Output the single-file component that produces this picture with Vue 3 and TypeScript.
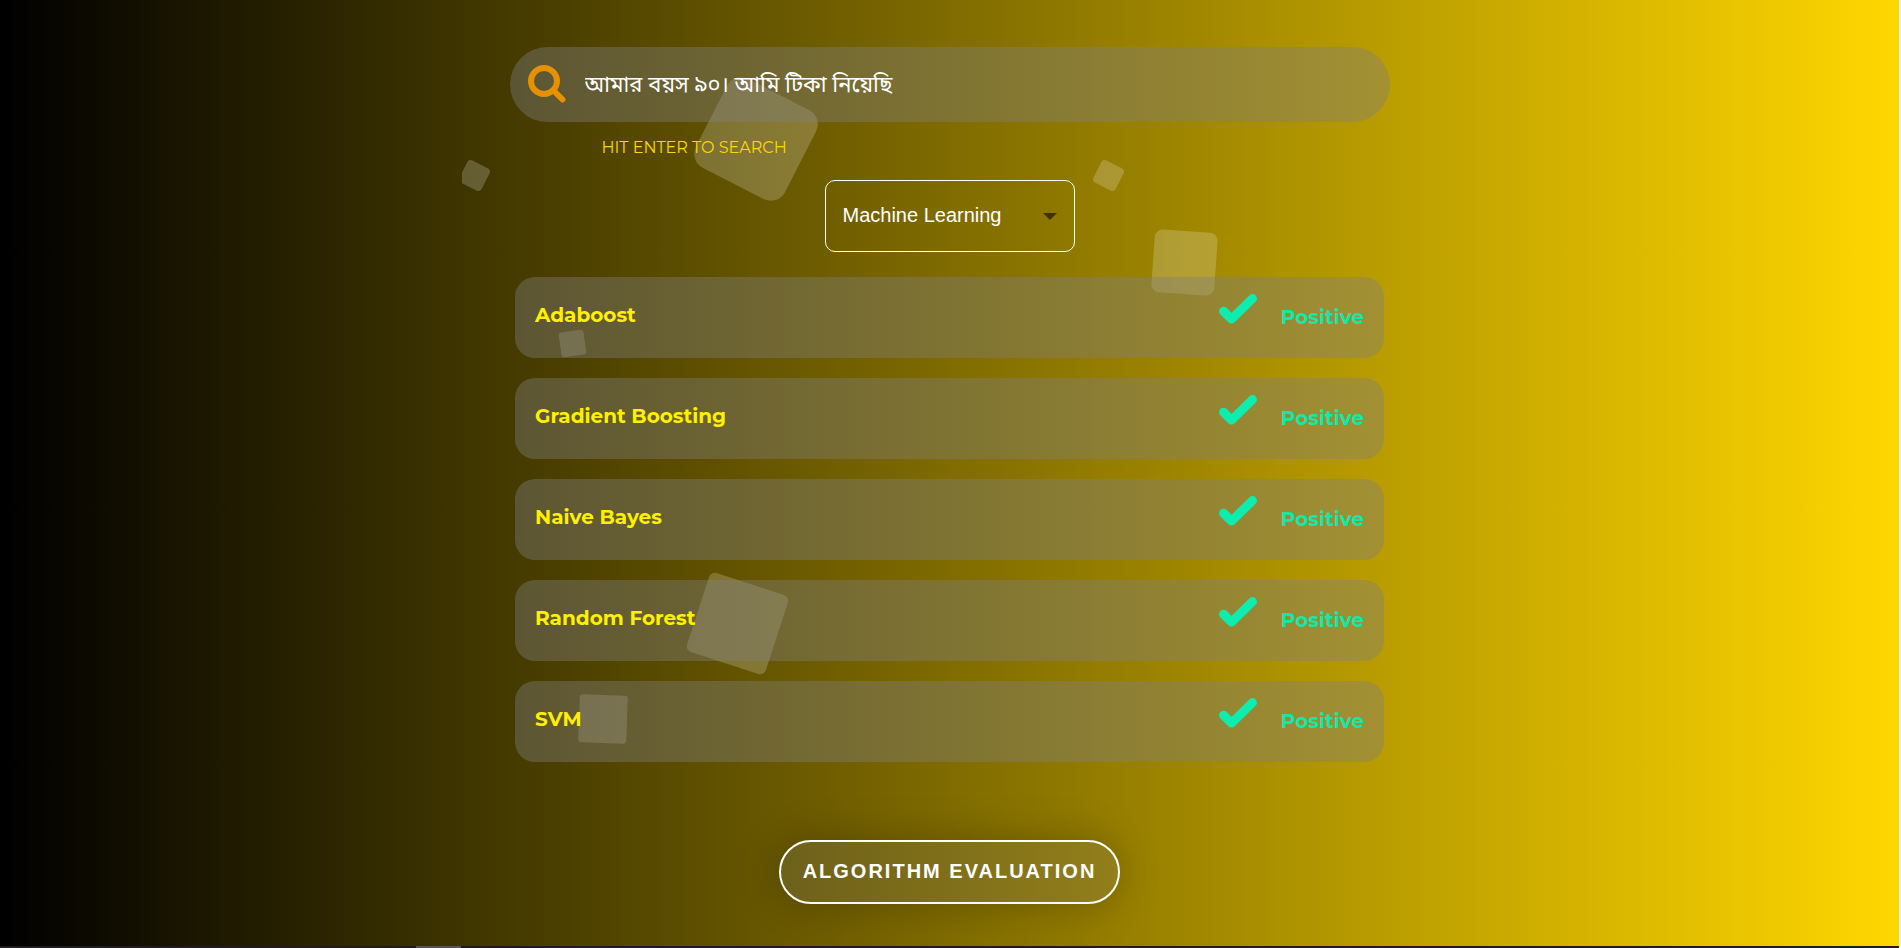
<script setup lang="ts">
import { ref } from 'vue'

interface Result {
  name: string
  label: string
}

const query = ref<string>('আমার বয়স ৯০। আমি টিকা নিয়েছি')
const family = ref<string>('Machine Learning')
const results: Result[] = [
  'Adaboost',
  'Gradient Boosting',
  'Naive Bayes',
  'Random Forest',
  'SVM',
].map((name) => ({ name, label: 'Positive' }))
</script>

<template>
  <main class="page">
    <div class="squares" aria-hidden="true">
      <span class="square sq-a"></span>
      <span class="square sq-b"></span>
      <span class="square sq-c"></span>
      <span class="square sq-d"></span>
      <span class="square sq-e"></span>
      <span class="square sq-f"></span>
      <span class="square sq-g"></span>
    </div>

    <form class="search" @submit.prevent>
      <div class="search-bar">
        <svg class="search-icon" viewBox="0 0 38 38" aria-hidden="true">
          <circle cx="16" cy="16" r="13" />
          <path d="M26 26l8.5 8.5" />
        </svg>
        <input id="query" v-model="query" class="search-input" type="text" />
      </div>
      <label class="hint" for="query">HIT ENTER TO SEARCH</label>
    </form>

    <div class="picker">
      <select v-model="family" class="picker-select" aria-label="Algorithm family">
        <option>Machine Learning</option>
      </select>
      <svg class="picker-arrow" viewBox="0 0 14 7" aria-hidden="true">
        <path d="M0 0h14L7 7z" />
      </svg>
    </div>

    <ul class="results">
      <li v-for="r in results" :key="r.name" class="result">
        <span class="result-name">{{ r.name }}</span>
        <svg class="check" viewBox="0 0 38 30" aria-hidden="true">
          <path d="M4.6 17.2l7.9 7.9L33.4 4.6" />
        </svg>
        <span class="result-label">{{ r.label }}</span>
      </li>
    </ul>

    <button class="evaluate" type="button">ALGORITHM EVALUATION</button>

    <div class="footer-edge" aria-hidden="true"></div>
  </main>
</template>

<style>
body {
  margin: 0;
}
</style>

<style scoped>
.page {
  position: relative;
  box-sizing: border-box;
  min-height: 100vh;
  padding: 47px 24px 42px;
  border-right: 2px solid #fdf6d8;
  background: linear-gradient(to right, #000, #ffd700);
  display: flex;
  flex-direction: column;
  align-items: center;
  overflow: hidden;
  font-family: Montserrat, Inter, "Noto Sans", sans-serif;
}

/* Floating decoration behind the content */
.squares {
  position: absolute;
  top: 0;
  bottom: 0;
  left: 50%;
  width: 976px;
  transform: translateX(-50%);
  overflow: hidden;
}

.square {
  position: absolute;
  background: rgba(255, 255, 255, 0.2);
}

.sq-a { left: 244px; top: 89px; width: 100px; height: 100px; border-radius: 16px; transform: rotate(27deg); }
.sq-b { left: 0; top: 163px; width: 25px; height: 25px; border-radius: 4px; transform: rotate(27deg); }
.sq-c { left: 634px; top: 163px; width: 25px; height: 25px; border-radius: 4px; transform: rotate(27deg); }
.sq-d { left: 691px; top: 231px; width: 63px; height: 63px; border-radius: 8px; transform: rotate(4deg); }
.sq-e { left: 98px; top: 331px; width: 25px; height: 25px; border-radius: 3px; transform: rotate(-8deg); }
.sq-f { left: 234px; top: 582px; width: 83px; height: 83px; border-radius: 6px; transform: rotate(18deg); }
.sq-g { left: 117px; top: 695px; width: 48px; height: 48px; border-radius: 3px; transform: rotate(2deg); }

/* Top edge of the strip below, with a lighter segment */
.footer-edge {
  position: absolute;
  right: 0;
  bottom: 0;
  left: 0;
  height: 2px;
  background: linear-gradient(to right, transparent 416px, #55525a 416px, #55525a 461px, transparent 461px), #1e1c22;
}

.search {
  position: relative;
  width: 100%;
  max-width: 880px;
}

.search-bar {
  box-sizing: border-box;
  display: flex;
  align-items: center;
  gap: 19px;
  height: 75px;
  padding: 0 40px 0 18px;
  border-radius: 38px;
  background: rgba(128, 128, 128, 0.4);
}

.search-icon {
  flex: none;
  width: 38px;
  height: 38px;
  margin-bottom: 2px;
  fill: none;
  stroke: #e69100;
  stroke-width: 6;
  stroke-linecap: round;
}

.search-input {
  flex: 1;
  min-width: 0;
  height: 60px;
  padding: 4px 0 0;
  border: 0;
  outline: 0;
  background: none;
  color: #fff;
  font: 22px/36px "Noto Sans Bengali", "Noto Sans", sans-serif;
}

.hint {
  display: block;
  margin: 15px 0 21px 92px;
  color: #ffd700;
  font-size: 16px;
  line-height: 22px;
}

.picker {
  position: relative;
  width: 250px;
}

.picker-select {
  appearance: none;
  display: block;
  width: 100%;
  height: 72px;
  padding: 0 48px 2px 17px;
  border: 1px solid #fff;
  border-radius: 10px;
  background: none;
  color: #fff;
  font: 20px "Liberation Sans", Arial, sans-serif;
}

.picker-arrow {
  position: absolute;
  right: 18px;
  top: 33px;
  width: 14px;
  height: 7px;
  fill: #3d3400;
  pointer-events: none;
}

.results {
  position: relative;
  box-sizing: border-box;
  width: 100%;
  max-width: 869px;
  margin: 25px 0 78px;
  padding: 0;
  list-style: none;
  display: grid;
  gap: 20px;
}

.result {
  box-sizing: border-box;
  display: flex;
  align-items: center;
  min-height: 81px;
  padding: 0 20px 1px;
  border-radius: 20px;
  background: rgba(128, 128, 128, 0.4);
  font-size: 20px;
  font-weight: 700;
  line-height: 26px;
}

.result-name {
  flex: 1;
  padding-bottom: 4px;
  color: #fff000;
}

.check {
  width: 38px;
  height: 30px;
  margin: 0 24px 16px 0;
  fill: none;
  stroke: #0fecb0;
  stroke-width: 9;
  stroke-linecap: round;
  stroke-linejoin: round;
}

.result-label {
  color: #12e8a8;
}

.evaluate {
  position: relative;
  box-sizing: border-box;
  height: 64px;
  padding: 0 22px 2px;
  border: 2px solid #fff;
  border-radius: 32px;
  background: rgba(128, 128, 128, 0.2);
  box-shadow: 0 0 40px rgba(0, 0, 0, 0.25);
  color: #fff;
  font: bold 20px "Liberation Sans", Arial, sans-serif;
  letter-spacing: 2px;
}
</style>
